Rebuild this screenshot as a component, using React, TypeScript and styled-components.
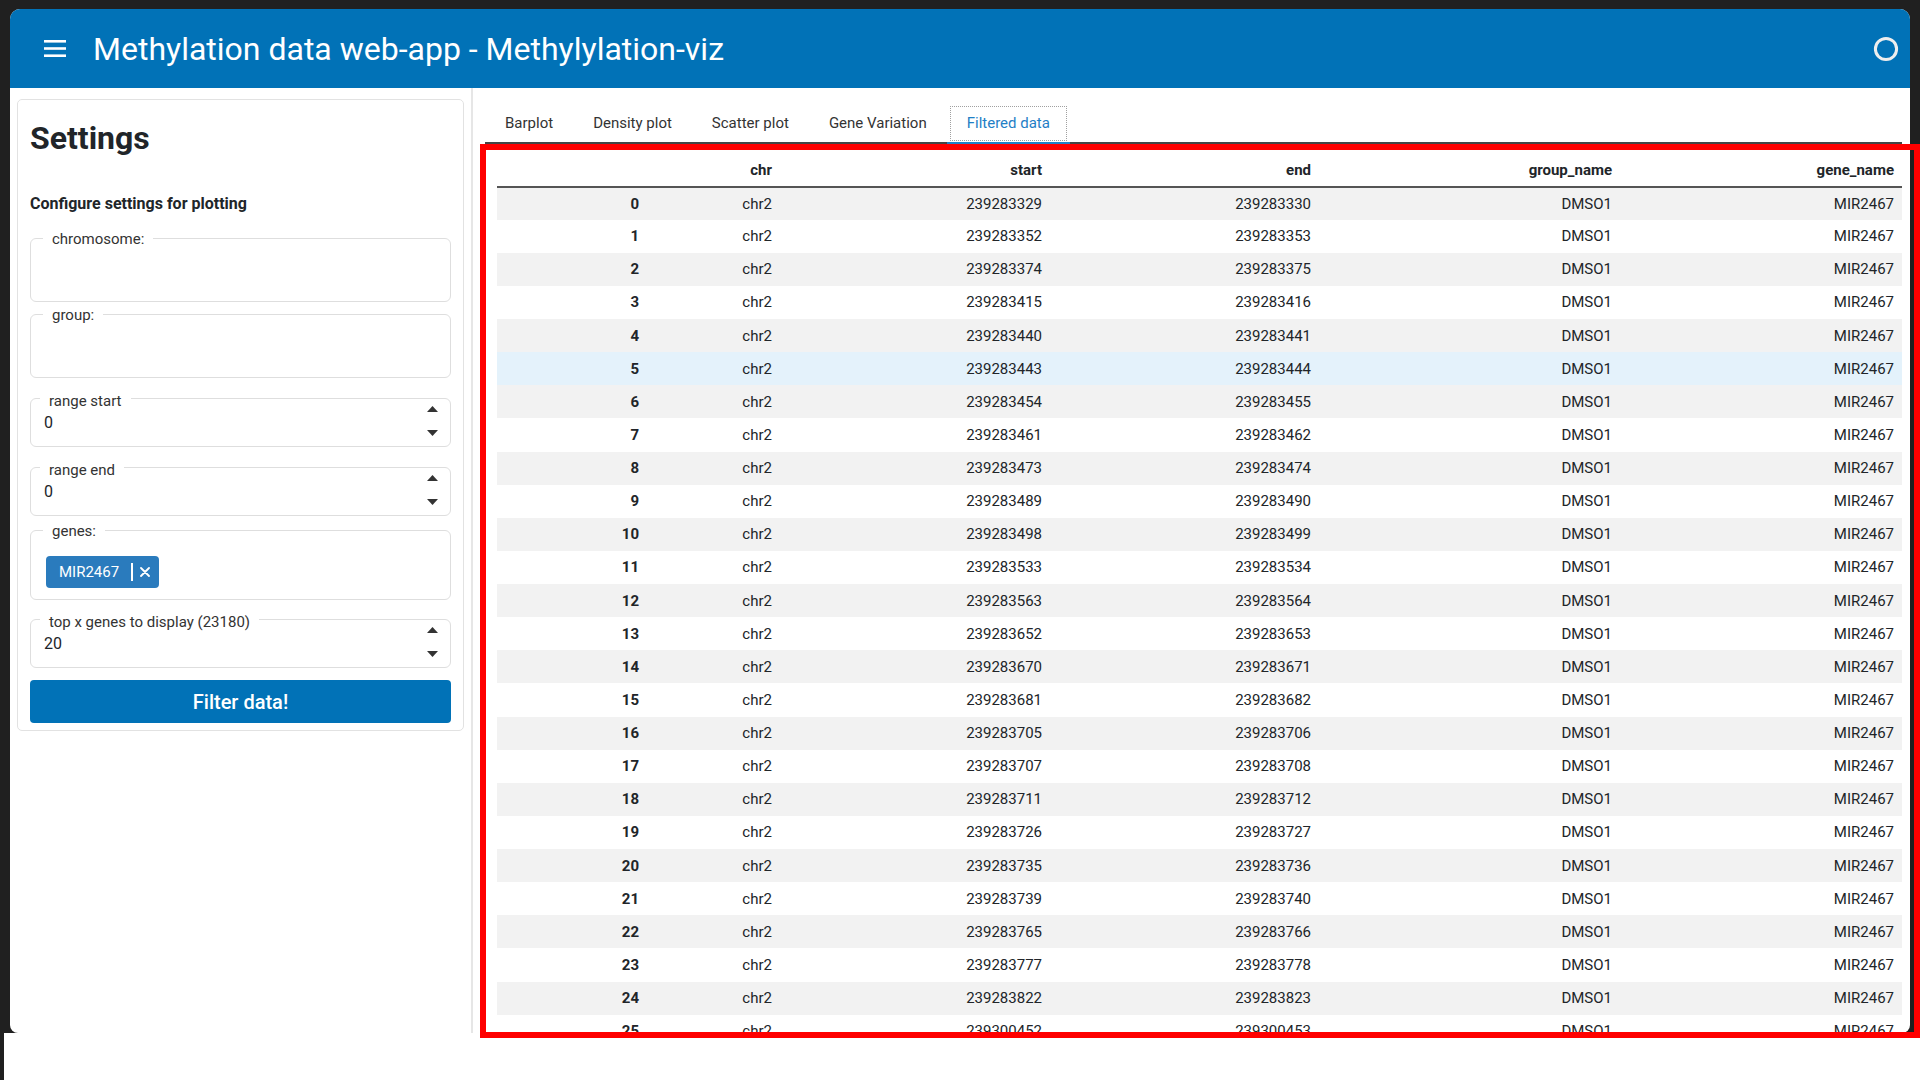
import React from 'react';
import styled, { createGlobalStyle } from 'styled-components';

const GlobalStyle = createGlobalStyle`
  html, body { margin: 0; padding: 0; }
  body {
    font-family: Roboto, "Noto Sans", "Liberation Sans", sans-serif;
    color: #212529;
    background: #fff;
  }
  * { box-sizing: border-box; }
`;

const BLUE = '#0172b7';

const Page = styled.div`
  position: relative;
  width: 1920px;
  height: 1080px;
  display: flex;
  flex-direction: column;
  overflow: hidden;
  background: #fff;
`;

const Frame = styled.div`
  height: 1033px;
  flex: none;
  background: #202020;
  padding: 9px 10px 0 10px;
  display: flex;
`;

const Window = styled.div`
  flex: 1;
  min-width: 0;
  background: #fff;
  border-radius: 10px 10px 8px 8px;
  overflow: hidden;
  display: flex;
  flex-direction: column;
`;

const BottomStrip = styled.div`
  flex: 1;
  border-left: 4px solid #202020;
`;

const Header = styled.header`
  height: 79px;
  flex: none;
  background: ${BLUE};
  display: flex;
  align-items: center;
  padding: 0 11px 0 34px;
  color: #fff;
`;

const Title = styled.h1`
  flex: 1;
  margin: 0 0 0 27px;
  font-size: 32px;
  line-height: 1;
  font-weight: 400;
  color: #fff;
`;

const Body = styled.div`
  flex: 1;
  min-height: 0;
  display: flex;
`;

const Sidebar = styled.aside`
  width: 463px;
  flex: none;
  border-right: 2px solid #e6e6e6;
  padding: 11px 7px 0 7px;
`;

const Card = styled.div`
  border: 1px solid #e2e2e2;
  border-radius: 5px;
  padding: 12px 12px 7px;
  display: flex;
  flex-direction: column;
`;

const Heading = styled.h2`
  margin: 7px 0 0;
  font-size: 32px;
  line-height: 38px;
  font-weight: 700;
  color: #212529;
`;

const SubHeading = styled.h5`
  margin: 37px 0 0;
  font-size: 16px;
  line-height: 19px;
  font-weight: 700;
  color: #212529;
`;

const Fields = styled.div`
  margin-top: 25px;
  display: flex;
  flex-direction: column;
  gap: 12px;
`;

const Field = styled.div<{ $h: number; $extra?: number }>`
  height: ${(p) => p.$h}px;
  margin-top: ${(p) => p.$extra ?? 0}px;
  border: 1px solid #dedede;
  border-radius: 6px;
  display: flex;
  flex-direction: column;
`;

const Legend = styled.span<{ $numeric?: boolean }>`
  display: block;
  width: fit-content;
  margin: ${(p) => (p.$numeric ? '-7px 0 0 9px' : '-9px 0 0 12px')};
  padding: 0 9px;
  background: #fff;
  font-size: 15px;
  line-height: 18px;
  color: #333;
`;

const NumberRow = styled.div`
  height: 47px;
  margin-top: -11px;
  display: flex;
  align-items: center;
  justify-content: space-between;
  padding: 0 12px 0 13px;
`;

const Value = styled.span`
  font-size: 16px;
  line-height: 20px;
  color: #212529;
`;

const Spinner = styled.div`
  display: flex;
  flex-direction: column;
  gap: 18px;
  padding-bottom: 3px;
`;

const Chip = styled.div`
  display: flex;
  align-items: center;
  width: fit-content;
  height: 32px;
  margin: 16px 0 0 15px;
  padding: 0 9px 0 13px;
  background: #2a7bbd;
  border-radius: 4px;
  color: #fff;
  font-size: 15px;
`;

const ChipSep = styled.span`
  width: 1.5px;
  height: 18px;
  background: #fff;
  margin: 0 7px 0 12px;
`;

const FilterButton = styled.button`
  height: 43px;
  width: 100%;
  border: none;
  border-radius: 4px;
  background: ${BLUE};
  color: #fff;
  font-family: inherit;
  font-size: 20px;
  font-weight: 500;
  cursor: pointer;
`;

const Main = styled.main`
  flex: 1;
  min-width: 0;
  padding: 15px 8px 0 12px;
  display: flex;
  flex-direction: column;
  overflow: hidden;
`;

const Nav = styled.nav`
  flex: none;
  display: flex;
  border-bottom: 2px solid #454545;
`;

const Tab = styled.div<{ $active?: boolean }>`
  height: ${(p) => (p.$active ? 41 : 39)}px;
  padding: 0 20px;
  display: flex;
  align-items: center;
  font-size: 15px;
  color: ${(p) => (p.$active ? '#1f80c6' : '#333')};
  ${(p) =>
    p.$active &&
    `
    border-bottom: 2px solid #1f80c6;
    margin-bottom: -2px;
    outline: 1px dotted #a0a0a0;
    outline-offset: -4px;
  `}
`;

const TableWrap = styled.div`
  flex: 1;
  min-height: 0;
  margin: 9.5px 0 0 12px;
  overflow: hidden;
`;

const Table = styled.table`
  width: 1405px;
  table-layout: fixed;
  border-collapse: collapse;
  font-size: 15px;
  line-height: 18px;
  color: #212529;
`;

const Col = styled.col<{ $w: number }>`
  width: ${(p) => p.$w}px;
`;

const HeadCell = styled.th`
  height: 33px;
  padding: 0 8px;
  text-align: right;
  font-weight: 700;
  white-space: nowrap;
  border-bottom: 2px solid #555;
`;

const Row = styled.tr<{ $striped?: boolean; $hover?: boolean }>`
  height: 33.125px;
  background: ${(p) => (p.$hover ? '#e4f2fb' : p.$striped ? '#f2f2f2' : 'transparent')};
`;

const IndexCell = styled.th`
  padding: 0 8px;
  text-align: right;
  font-weight: 700;
  white-space: nowrap;
`;

const Cell = styled.td`
  padding: 0 8px;
  text-align: right;
  white-space: nowrap;
`;

const RedFrame = styled.div`
  position: absolute;
  left: 480px;
  top: 144px;
  width: 1440px;
  height: 894px;
  border: 6px solid #ff0000;
  pointer-events: none;
`;

const MenuIcon = () => (
  <svg width="22" height="17" viewBox="0 0 22 17">
    <rect x="0" y="0" width="22" height="2.6" fill="#fff" />
    <rect x="0" y="7.2" width="22" height="2.6" fill="#fff" />
    <rect x="0" y="14.4" width="22" height="2.6" fill="#fff" />
  </svg>
);

const RingIcon = () => (
  <svg width="26" height="26" viewBox="0 0 26 26">
    <circle cx="13" cy="13" r="10.6" fill="none" stroke="#eeeeee" strokeWidth="3" />
  </svg>
);

const Tri = ({ up }: { up?: boolean }) => (
  <svg width="11" height="6" viewBox="0 0 11 6">
    <path d={up ? 'M0 6 L5.5 0 L11 6 Z' : 'M0 0 L5.5 6 L11 0 Z'} fill="#333" />
  </svg>
);

const CloseIcon = () => (
  <svg width="10" height="10" viewBox="0 0 10 10">
    <path d="M1 1 L9 9 M9 1 L1 9" stroke="#fff" strokeWidth="1.8" strokeLinecap="round" />
  </svg>
);

const NumberField = ({ label, value, extra }: { label: string; value: string; extra: number }) => (
  <Field $h={49} $extra={extra}>
    <Legend $numeric>{label}</Legend>
    <NumberRow>
      <Value>{value}</Value>
      <Spinner>
        <Tri up />
        <Tri />
      </Spinner>
    </NumberRow>
  </Field>
);

const tabs = ['Barplot', 'Density plot', 'Scatter plot', 'Gene Variation', 'Filtered data'];

const columns: { key: string; w: number }[] = [
  { key: '', w: 150 },
  { key: 'chr', w: 133 },
  { key: 'start', w: 270 },
  { key: 'end', w: 269 },
  { key: 'group_name', w: 301 },
  { key: 'gene_name', w: 282 },
];

const startOffsets = [
  329, 352, 374, 415, 440, 443, 454, 461, 473, 489, 498, 533, 563, 652, 670, 681, 705, 707, 711,
  726, 735, 739, 765, 777, 822,
];

const rows = [
  ...startOffsets.map((o) => 239283000 + o),
  239300452,
].map((start, i) => ({ i, chr: 'chr2', start, end: start + 1, group: 'DMSO1', gene: 'MIR2467' }));

export default function App() {
  return (
    <Page>
      <GlobalStyle />
      <Frame>
        <Window>
          <Header>
            <MenuIcon />
            <Title>Methylation data web-app - Methylylation-viz</Title>
            <RingIcon />
          </Header>
          <Body>
            <Sidebar>
              <Card>
                <Heading>Settings</Heading>
                <SubHeading>Configure settings for plotting</SubHeading>
                <Fields>
                  <Field $h={64}>
                    <Legend>chromosome:</Legend>
                  </Field>
                  <Field $h={64}>
                    <Legend>group:</Legend>
                  </Field>
                  <NumberField label="range start" value="0" extra={8} />
                  <NumberField label="range end" value="0" extra={8} />
                  <Field $h={70} $extra={2}>
                    <Legend>genes:</Legend>
                    <Chip>
                      <span>MIR2467</span>
                      <ChipSep />
                      <CloseIcon />
                    </Chip>
                  </Field>
                  <NumberField label="top x genes to display (23180)" value="20" extra={7} />
                  <FilterButton>Filter data!</FilterButton>
                </Fields>
              </Card>
            </Sidebar>
            <Main>
              <Nav>
                {tabs.map((t) => (
                  <Tab key={t} $active={t === 'Filtered data'}>
                    {t}
                  </Tab>
                ))}
              </Nav>
              <TableWrap>
                <Table>
                  <colgroup>
                    {columns.map((c) => (
                      <Col key={c.key || 'idx'} $w={c.w} />
                    ))}
                  </colgroup>
                  <thead>
                    <tr>
                      {columns.map((c) => (
                        <HeadCell key={c.key || 'idx'}>{c.key}</HeadCell>
                      ))}
                    </tr>
                  </thead>
                  <tbody>
                    {rows.map((r) => (
                      <Row key={r.i} $striped={r.i % 2 === 0} $hover={r.i === 5}>
                        <IndexCell>{r.i}</IndexCell>
                        <Cell>{r.chr}</Cell>
                        <Cell>{r.start}</Cell>
                        <Cell>{r.end}</Cell>
                        <Cell>{r.group}</Cell>
                        <Cell>{r.gene}</Cell>
                      </Row>
                    ))}
                  </tbody>
                </Table>
              </TableWrap>
            </Main>
          </Body>
        </Window>
      </Frame>
      <BottomStrip />
      <RedFrame />
    </Page>
  );
}
